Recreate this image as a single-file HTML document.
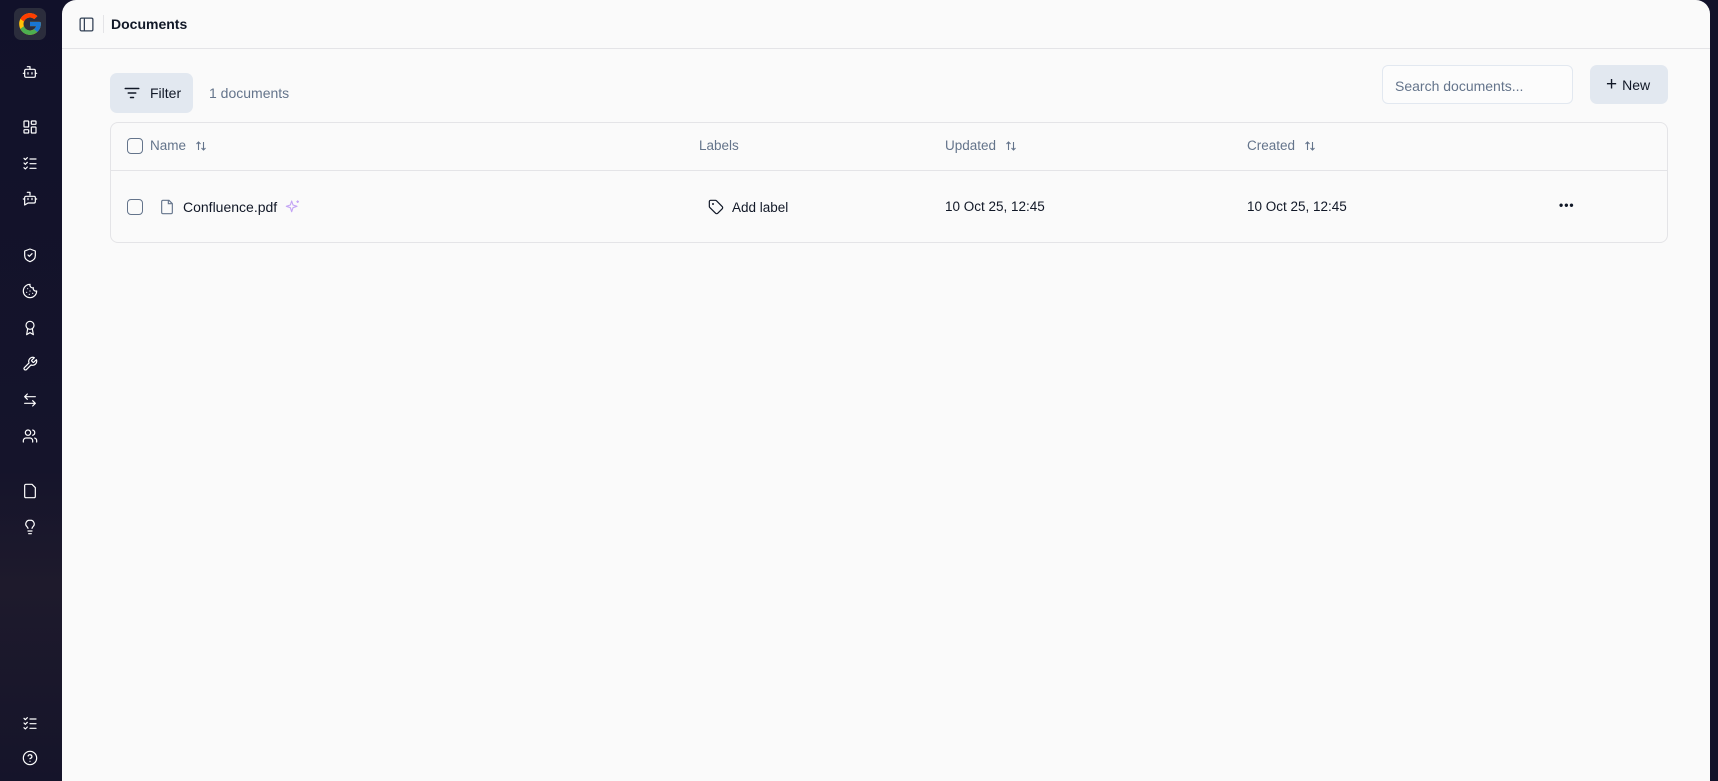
<!DOCTYPE html>
<html><head><meta charset="utf-8"><style>
*{box-sizing:border-box;margin:0;padding:0}
body{width:1718px;height:781px;background:#12122a;font-family:"Liberation Sans",sans-serif;overflow:hidden;position:relative}
.side{position:absolute;left:0;top:0;width:62px;height:781px;background:linear-gradient(180deg,#11112a 0%,#15142b 60%,#1e1a2c 75%,#15142a 100%)}
.logo{position:absolute;left:14px;top:8px;width:32px;height:32px;border-radius:7px;background:#2b2d3c;display:flex;align-items:center;justify-content:center}
.ic{position:absolute;left:22px;width:16px;height:16px}
.ic svg{width:16px;height:16px;fill:none;stroke:#fff;stroke-width:1.8;stroke-linecap:round;stroke-linejoin:round}
.main{position:absolute;left:62px;top:0;width:1648px;height:781px;background:#fafafa;border-radius:14px 14px 0 0}
.hdr{height:49px;border-bottom:1px solid #e4e4e7;display:flex;align-items:center;padding-left:16px}
.hdr .t{font-weight:bold;font-size:14px;color:#111827;margin-left:8px;padding-left:7px;border-left:1px solid #e4e4e7;line-height:18px}
.abs{position:absolute}
.btn{background:#e2e8f0;border-radius:7px;display:flex;align-items:center;font-size:14px;color:#111827}
.table{position:absolute;left:48px;top:122px;width:1558px;height:121px;border:1px solid #e4e4e7;border-radius:8px}
.th{position:absolute;top:138px;font-size:13.5px;color:#64748b;display:flex;align-items:center}
.td{position:absolute;top:199px;font-size:13.5px;color:#111827;display:flex;align-items:center}
.cb{width:16px;height:16px;border:1.5px solid #64748b;border-radius:4px;position:absolute}
.sort{margin-left:9px;width:12px;height:12px}
</style></head><body>
<div class="side">
<div class="logo"><svg width="26" height="26" viewBox="0 0 48 48"><path d="M43.6 20.5H42V20H24v8h11.3C33.7 32.7 29.2 36 24 36c-6.6 0-12-5.4-12-12s5.4-12 12-12c3.1 0 5.8 1.2 7.9 3.1l5.7-5.7C34 6.1 29.3 4 24 4 13 4 4 13 4 24s9 20 20 20 20-9 20-20c0-1.3-.1-2.4-.4-3.5z" fill="#FFC107"/><path d="M6.3 14.7l6.6 4.8C14.7 15.1 19 12 24 12c3.1 0 5.8 1.2 7.9 3.1l5.7-5.7C34 6.1 29.3 4 24 4 16.3 4 9.7 8.3 6.3 14.7z" fill="#FF3D00"/><path d="M24 44c5.2 0 9.9-2 13.4-5.2l-6.2-5.2C29.2 35.1 26.7 36 24 36c-5.2 0-9.6-3.3-11.3-8l-6.5 5C9.5 39.6 16.2 44 24 44z" fill="#4CAF50"/><path d="M43.6 20.5H42V20H24v8h11.3c-.8 2.2-2.2 4.2-4.1 5.6l6.2 5.2C37 39.2 44 34 44 24c0-1.3-.1-2.4-.4-3.5z" fill="#1976D2"/></svg></div>
<div class="ic" style="top:64px"><svg viewBox="0 0 24 24"><rect x="4" y="8" width="16" height="12" rx="2"/><path d="M12 8V4H8M2 14h2M20 14h2M9 13v2M15 13v2"/></svg></div>
<div class="ic" style="top:119px"><svg viewBox="0 0 24 24"><rect x="3" y="3" width="7" height="9" rx="1"/><rect x="14" y="3" width="7" height="5" rx="1"/><rect x="14" y="12" width="7" height="9" rx="1"/><rect x="3" y="16" width="7" height="5" rx="1"/></svg></div>
<div class="ic" style="top:155px"><svg viewBox="0 0 24 24"><path d="M3 5l2 2 3-3M3 12l2 2 3-3M3 19l2 2 3-3M12 6h9M12 13h9M12 20h9"/></svg></div>
<div class="ic" style="top:191px"><svg viewBox="0 0 24 24"><path d="M12 6V2H8M4 10a2 2 0 012-2h12a2 2 0 012 2v6a2 2 0 01-2 2H9l-5 3zM9 11v2M15 11v2M2 12h2M20 12h2"/></svg></div>
<div class="ic" style="top:247px"><svg viewBox="0 0 24 24"><path d="M20 13c0 5-3.5 7.5-8 9-4.5-1.5-8-4-8-9V6l8-3 8 3z"/><path d="M9 12l2 2 4-4"/></svg></div>
<div class="ic" style="top:283px"><svg viewBox="0 0 24 24"><path d="M12 2a10 10 0 1010 10 4 4 0 01-5-5 4 4 0 01-5-5"/><path d="M8.5 8.5h0M16 15.5h0M12 12h0M11 17h0M7 14h0"/></svg></div>
<div class="ic" style="top:320px"><svg viewBox="0 0 24 24"><circle cx="12" cy="8" r="6"/><path d="M8.5 13L7 22l5-3 5 3-1.5-9"/></svg></div>
<div class="ic" style="top:356px"><svg viewBox="0 0 24 24"><path d="M14.7 6.3a1 1 0 000 1.4l1.6 1.6a1 1 0 001.4 0l3.8-3.8a6 6 0 01-7.9 7.9l-6.9 6.9a2.1 2.1 0 01-3-3l6.9-6.9a6 6 0 017.9-7.9z"/></svg></div>
<div class="ic" style="top:392px"><svg viewBox="0 0 24 24"><path d="M8 3L4 7l4 4M4 7h16M16 21l4-4-4-4M20 17H4"/></svg></div>
<div class="ic" style="top:428px"><svg viewBox="0 0 24 24"><path d="M16 21v-2a4 4 0 00-4-4H6a4 4 0 00-4 4v2"/><circle cx="9" cy="7" r="4"/><path d="M22 21v-2a4 4 0 00-3-3.9M16 3.1a4 4 0 010 7.8"/></svg></div>
<div class="ic" style="top:483px"><svg viewBox="0 0 24 24"><path d="M15 2H6a2 2 0 00-2 2v16a2 2 0 002 2h12a2 2 0 002-2V7z"/></svg></div>
<div class="ic" style="top:519px"><svg viewBox="0 0 24 24"><path d="M15 14c.2-1 .7-1.7 1.5-2.5A5.5 5.5 0 0012 2a5.5 5.5 0 00-4.5 9.5c.8.8 1.3 1.5 1.5 2.5M9 18h6M10 22h4"/></svg></div>
<div class="ic" style="top:715px"><svg viewBox="0 0 24 24"><path d="M3 5l2 2 3-3M3 12l2 2 3-3M3 19l2 2 3-3M12 6h9M12 13h9M12 20h9"/></svg></div>
<div class="ic" style="top:750px"><svg viewBox="0 0 24 24"><circle cx="12" cy="12" r="10"/><path d="M9.1 9a3 3 0 015.8 1c0 2-3 3-3 3M12 17h0"/></svg></div>
</div>
<div class="main">
<div class="hdr"><svg width="17" height="17" viewBox="0 0 24 24" fill="none" stroke="#334155" stroke-width="1.8"><rect x="3" y="3" width="18" height="18" rx="2"/><path d="M9 3v18"/></svg><span class="t">Documents</span></div>
<div class="abs btn" style="left:48px;top:73px;width:83px;height:40px;padding-left:13px"><svg width="18" height="18" viewBox="0 0 24 24" fill="none" stroke="#111827" stroke-width="2" stroke-linecap="round"><path d="M3 6h18M7 12h10M10 18h4"/></svg><span style="margin-left:9px">Filter</span></div>
<div class="abs" style="left:147px;top:85px;font-size:14px;color:#64748b">1 documents</div>
<div class="abs" style="left:1320px;top:65px;width:191px;height:39px;border:1px solid #e2e8f0;border-radius:6px;background:#fcfcfc;font-size:14px;color:#64748b;padding:12px 0 0 12px">Search documents...</div>
<div class="abs btn" style="left:1528px;top:65px;width:78px;height:39px;padding-left:16px"><span style="font-size:19px;font-weight:300;margin-right:5px;line-height:1">+</span>New</div>
<div class="table"><div style="position:absolute;left:0;right:0;top:47px;border-top:1px solid #e4e4e7"></div></div>
<div class="cb" style="left:65px;top:138px"></div>
<div class="th" style="left:88px">Name<svg class="sort" viewBox="0 0 12 12" fill="none" stroke="#64748b" stroke-width="1.1"><path d="M3.5 10V2M1.5 4l2-2 2 2M8.5 2v8M6.5 8l2 2 2-2"/></svg></div>
<div class="th" style="left:637px">Labels</div>
<div class="th" style="left:883px">Updated<svg class="sort" viewBox="0 0 12 12" fill="none" stroke="#64748b" stroke-width="1.1"><path d="M3.5 10V2M1.5 4l2-2 2 2M8.5 2v8M6.5 8l2 2 2-2"/></svg></div>
<div class="th" style="left:1185px">Created<svg class="sort" viewBox="0 0 12 12" fill="none" stroke="#64748b" stroke-width="1.1"><path d="M3.5 10V2M1.5 4l2-2 2 2M8.5 2v8M6.5 8l2 2 2-2"/></svg></div>
<div class="cb" style="left:65px;top:199px"></div>
<div class="td" style="left:97px"><svg width="16" height="16" viewBox="0 0 24 24" fill="none" stroke="#64748b" stroke-width="1.7"><path d="M15 2H6a2 2 0 00-2 2v16a2 2 0 002 2h12a2 2 0 002-2V7z"/><path d="M14 2v5h5"/></svg><span style="margin-left:8px;font-size:14px">Confluence.pdf</span><svg style="margin-left:8px" width="16" height="16" viewBox="0 0 24 24" fill="none" stroke="#c4a5f5" stroke-width="1.7" stroke-linejoin="round"><path d="M10 3l2 6 6 2-6 2-2 6-2-6-6-2 6-2zM19 2v4M17 4h4"/></svg></div>
<div class="td" style="left:646px"><svg width="16" height="16" viewBox="0 0 24 24" fill="none" stroke="#111827" stroke-width="1.8" stroke-linejoin="round"><path d="M12.6 2.6A2 2 0 0011.2 2H4a2 2 0 00-2 2v7.2a2 2 0 00.6 1.4l8.7 8.7a2.4 2.4 0 003.4 0l6.6-6.6a2.4 2.4 0 000-3.4z"/><circle cx="7.5" cy="7.5" r=".6" fill="#111827"/></svg><span style="margin-left:8px">Add label</span></div>
<div class="td" style="left:883px">10 Oct 25, 12:45</div>
<div class="td" style="left:1185px">10 Oct 25, 12:45</div>
<div class="td" style="left:1497px;top:198px;font-weight:bold;letter-spacing:1px;font-size:12px">•••</div>
</div>
</body></html>
